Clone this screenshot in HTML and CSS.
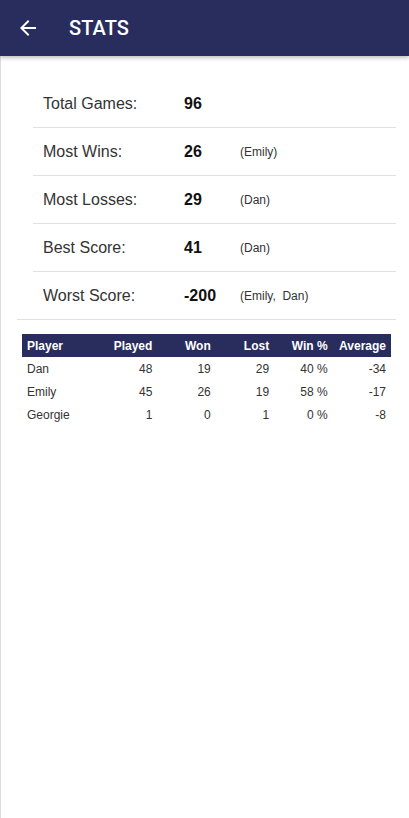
FILE: index.html
```html
<!DOCTYPE html>
<html lang="en">
<head>
<meta charset="utf-8">
<title>Stats</title>
<link rel="stylesheet" href="styles.css">
</head>
<body>
<header class="toolbar">
  <span class="back">
    <svg width="24" height="24" viewBox="0 0 24 24"><path fill="#fff" d="M20 11H7.83l5.59-5.59L12 4l-8 8 8 8 1.41-1.41L7.83 13H20v-2z"/></svg>
  </span>
  <h1 class="title">STATS</h1>
</header>
<main class="content">
  <div class="summary">
    <div class="stat"><span class="label">Total Games:</span><span class="value">96</span><span class="who"></span></div>
    <div class="stat"><span class="label">Most Wins:</span><span class="value">26</span><span class="who">(Emily)</span></div>
    <div class="stat"><span class="label">Most Losses:</span><span class="value">29</span><span class="who">(Dan)</span></div>
    <div class="stat"><span class="label">Best Score:</span><span class="value">41</span><span class="who">(Dan)</span></div>
    <div class="stat"><span class="label">Worst Score:</span><span class="value">-200</span><span class="who">(Emily,  Dan)</span></div>
  </div>
  <table class="players">
    <thead>
      <tr><th class="c-name">Player</th><th>Played</th><th>Won</th><th>Lost</th><th>Win %</th><th>Average</th></tr>
    </thead>
    <tbody>
      <tr><td class="c-name">Dan</td><td>48</td><td>19</td><td>29</td><td>40 %</td><td>-34</td></tr>
      <tr><td class="c-name">Emily</td><td>45</td><td>26</td><td>19</td><td>58 %</td><td>-17</td></tr>
      <tr><td class="c-name">Georgie</td><td>1</td><td>0</td><td>1</td><td>0 %</td><td>-8</td></tr>
    </tbody>
  </table>
</main>
</body>
</html>
```
FILE: styles.css
```css
* { box-sizing: border-box; }
html, body { margin: 0; padding: 0; background: #fff; }
body { font-family: "Liberation Sans", Arial, sans-serif; color: #333; }

.toolbar {
  height: 56px;
  background: #292d5e;
  display: flex;
  align-items: center;
  padding-left: 16px;
  box-shadow: 0 2px 4px rgba(0,0,0,0.25);
  position: relative;
  z-index: 1;
}
.back { width: 24px; height: 24px; display: flex; }
.title {
  margin: 0 0 0 29px;
  font-family: Roboto, "Liberation Sans", sans-serif;
  font-weight: 500;
  font-size: 20px;
  color: #fff;
  letter-spacing: 0.1px;
}

.content {
  border-left: 1px solid #dcdcdc;
  min-height: calc(100vh - 56px);
  padding-top: 24px;
}

.summary {
  margin: 0 13px 0 16px;
  border-bottom: 1px solid #e0e0e0;
}
.stat {
  margin-left: 16px;
  height: 48px;
  display: flex;
  align-items: center;
  padding-left: 10px;
  border-bottom: 1px solid #e0e0e0;
}
.stat:last-child { border-bottom: none; height: 47px; }
.label { width: 141px; font-size: 16px; color: #333; }
.value { width: 56px; font-size: 16px; font-weight: bold; color: #111; }
.who { font-size: 12px; color: #333; white-space: pre; }

.players {
  margin: 14px 0 0 21px;
  width: 369px;
  border-collapse: collapse;
  font-size: 12px;
  table-layout: fixed;
}
.players th {
  background: #292d5e;
  color: #fff;
  font-weight: bold;
  height: 23px;
  padding: 0 5px;
  text-align: right;
  width: 58.4px;
}
.players th.c-name { width: 77px; text-align: left; }
.players td {
  height: 23px;
  padding: 0 5px;
  text-align: right;
  color: #333;
}
.players td.c-name { text-align: left; }
```
